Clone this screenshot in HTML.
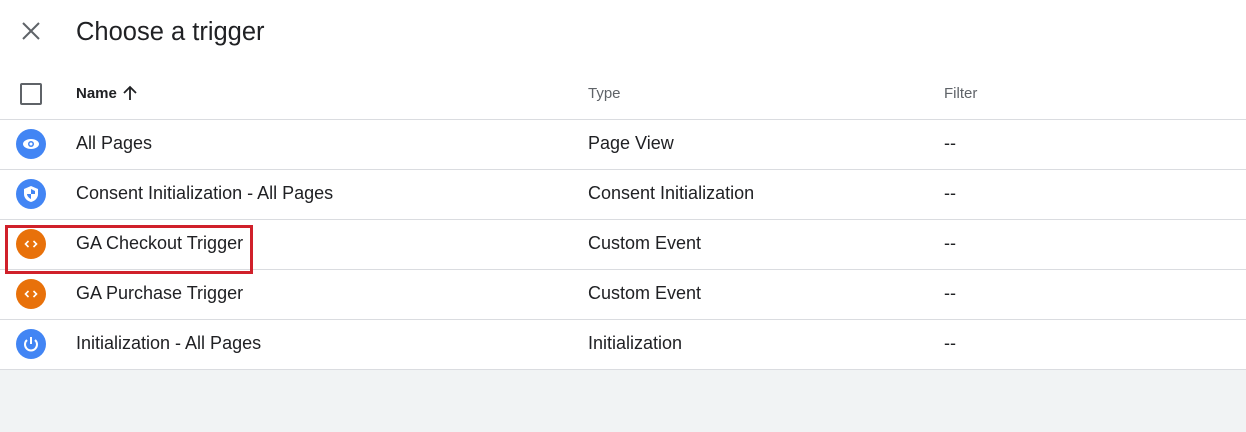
<!DOCTYPE html><html><head><style>
body{margin:0;width:1246px;height:432px;background:#f1f3f4;font-family:"Liberation Sans",sans-serif;overflow:hidden;position:relative}
.w{position:absolute;left:0;top:0;width:1246px;height:369px;background:#fff}
.t{position:absolute;left:76px;top:18px;font-size:25.5px;color:#202124}
.x{position:absolute;left:20px;top:20px}
.row{position:absolute;left:0;width:1246px;height:50px;border-bottom:1px solid #dadce0;font-size:18px;color:#202124}
.row span{position:absolute;top:14px}
.h span{font-size:15px;color:#5f6368;top:16px}
.ic{position:absolute;left:16px;top:10px;width:30px;height:30px;border-radius:50%}
.b{background:#4285f4}.o{background:#e8710a}
</style></head><body><div class="w">
<svg class="x" width="22" height="22" viewBox="0 0 22 22"><path d="M3 3L19 19M19 3L3 19" stroke="#5f6368" stroke-width="2"/></svg>
<div class="t">Choose a trigger</div>
<div class="row h" style="top:69px"><div style="position:absolute;left:20px;top:14px;width:18px;height:18px;border:2px solid #5f6368;border-radius:2px"></div><span style="left:76px;color:#202124;font-weight:bold">Name</span><svg style="position:absolute;left:122px;top:16px" width="16" height="16" viewBox="0 0 16 16"><path d="M8 15V2M2 8L8 2L14 8" stroke="#202124" stroke-width="1.8" fill="none"/></svg><span style="left:588px">Type</span><span style="left:944px">Filter</span></div>
<div class="row" style="top:119px"><div class="ic b"><svg width="30" height="30"><ellipse cx="15" cy="15" rx="8" ry="5" fill="#fff"/><circle cx="15" cy="15" r="3" fill="#4285f4"/><circle cx="15" cy="15" r="1.5" fill="#fff"/></svg></div><span style="left:76px">All Pages</span><span style="left:588px">Page View</span><span style="left:944px">--</span></div>
<div class="row" style="top:169px"><div class="ic b"><svg width="30" height="30"><path d="M15 7L22 10V15C22 19 19 22 15 23C11 22 8 19 8 15V10Z" fill="#fff"/><path d="M15 10L19 12V15H15ZM15 15V20C13 19 11 17 11 15Z" fill="#4285f4"/></svg></div><span style="left:76px">Consent Initialization - All Pages</span><span style="left:588px">Consent Initialization</span><span style="left:944px">--</span></div>
<div class="row" style="top:219px"><div class="ic o"><svg width="30" height="30"><path d="M12.5 12L9.5 15L12.5 18M17.5 12L20.5 15L17.5 18" stroke="#fff" stroke-width="1.6" fill="none"/></svg></div><span style="left:76px">GA Checkout Trigger</span><span style="left:588px">Custom Event</span><span style="left:944px">--</span></div>
<div class="row" style="top:269px"><div class="ic o"><svg width="30" height="30"><path d="M12.5 12L9.5 15L12.5 18M17.5 12L20.5 15L17.5 18" stroke="#fff" stroke-width="1.6" fill="none"/></svg></div><span style="left:76px">GA Purchase Trigger</span><span style="left:588px">Custom Event</span><span style="left:944px">--</span></div>
<div class="row" style="top:319px"><div class="ic b"><svg width="30" height="30"><path d="M11 11A6 6 0 1 0 19 11" stroke="#fff" stroke-width="2" fill="none"/><path d="M15 8V15" stroke="#fff" stroke-width="2"/></svg></div><span style="left:76px">Initialization - All Pages</span><span style="left:588px">Initialization</span><span style="left:944px">--</span></div>
<div style="position:absolute;left:5px;top:225px;width:242px;height:43px;border:3px solid #d0202a"></div>
</div></body></html>
